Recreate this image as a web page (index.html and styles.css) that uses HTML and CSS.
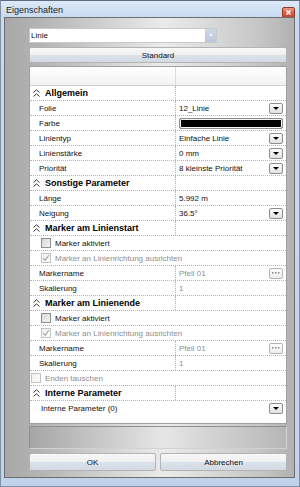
FILE: index.html
```html
<!DOCTYPE html>
<html lang="de">
<head>
  <meta charset="UTF-8" />
  <meta name="viewport" content="width=device-width, initial-scale=1.0" />
  <title>Eigenschaften</title>
  <link rel="stylesheet" href="styles.css">
</head>
<body>
  <div class="window">
    <div class="titlebar">
      <span class="title">Eigenschaften</span>
      <svg class="close" width="13" height="11" viewBox="0 0 13 11">
        <defs>
          <linearGradient id="red" x1="0" y1="0" x2="0" y2="1">
            <stop offset="0" stop-color="#eda08f"/>
            <stop offset="0.5" stop-color="#d9634a"/>
            <stop offset="1" stop-color="#c4432b"/>
          </linearGradient>
        </defs>
        <rect x="0.5" y="0.5" width="12" height="10" rx="1.5" fill="url(#red)" stroke="#8e3a2a"/>
        <path d="M4.5 3.5 L8.5 7.5 M8.5 3.5 L4.5 7.5" stroke="#fff" stroke-width="1.4"/>
      </svg>
    </div>

    <div class="client">
      <div class="combo">
        <span class="combo-text">Linie</span>
        <span class="combo-btn"><i class="combo-arrow"></i></span>
      </div>

      <div class="btn standard">Standard</div>

      <div class="grid">
        <div class="grid-head"><div class="name"></div><div class="value"></div></div>

        <!-- Allgemein -->
        <div class="row cat">
          <div class="name"><svg class="expander" width="7" height="8" viewBox="0 0 7 8"><path d="M0.5 3.5 L3.5 0.8 L6.5 3.5 M0.5 7.5 L3.5 4.8 L6.5 7.5" fill="none" stroke="#333" stroke-width="1"/></svg>Allgemein</div>
          <div class="value"></div>
        </div>
        <div class="row"><div class="name">Folie</div><div class="value">12_Linie<span class="drop"></span></div></div>
        <div class="row"><div class="name">Farbe</div><div class="value"><span class="swatch"></span></div></div>
        <div class="row"><div class="name">Linientyp</div><div class="value">Einfache Linie<span class="drop"></span></div></div>
        <div class="row"><div class="name">Linienstärke</div><div class="value">0 mm<span class="drop"></span></div></div>
        <div class="row"><div class="name">Priorität</div><div class="value">8 kleinste Priorität<span class="drop"></span></div></div>

        <!-- Sonstige Parameter -->
        <div class="row cat">
          <div class="name"><svg class="expander" width="7" height="8" viewBox="0 0 7 8"><path d="M0.5 3.5 L3.5 0.8 L6.5 3.5 M0.5 7.5 L3.5 4.8 L6.5 7.5" fill="none" stroke="#333" stroke-width="1"/></svg>Sonstige Parameter</div>
          <div class="value"></div>
        </div>
        <div class="row"><div class="name">Länge</div><div class="value">5.992 m</div></div>
        <div class="row"><div class="name">Neigung</div><div class="value">36.5°<span class="drop"></span></div></div>

        <!-- Marker am Linienstart -->
        <div class="row cat">
          <div class="name"><svg class="expander" width="7" height="8" viewBox="0 0 7 8"><path d="M0.5 3.5 L3.5 0.8 L6.5 3.5 M0.5 7.5 L3.5 4.8 L6.5 7.5" fill="none" stroke="#333" stroke-width="1"/></svg>Marker am Linienstart</div>
          <div class="value"></div>
        </div>
        <div class="row full"><span class="check"></span>Marker aktiviert</div>
        <div class="row full disabled"><span class="check checked"><svg width="8" height="8" viewBox="0 0 8 8"><path d="M1.2 4.2 L3.2 6.4 L6.8 1.2" fill="none" stroke="#a2a2a2" stroke-width="1.1"/></svg></span>Marker an Linienrichtung ausrichten</div>
        <div class="row"><div class="name">Markername</div><div class="value disabled">Pfeil 01<span class="drop dots"><svg width="8" height="2" viewBox="0 0 8 2"><rect x="0" y="0" width="1.5" height="1.5" fill="#888"/><rect x="3" y="0" width="1.5" height="1.5" fill="#888"/><rect x="6" y="0" width="1.5" height="1.5" fill="#888"/></svg></span></div></div>
        <div class="row"><div class="name">Skalierung</div><div class="value disabled">1</div></div>

        <!-- Marker am Linienende -->
        <div class="row cat">
          <div class="name"><svg class="expander" width="7" height="8" viewBox="0 0 7 8"><path d="M0.5 3.5 L3.5 0.8 L6.5 3.5 M0.5 7.5 L3.5 4.8 L6.5 7.5" fill="none" stroke="#333" stroke-width="1"/></svg>Marker am Linienende</div>
          <div class="value"></div>
        </div>
        <div class="row full"><span class="check"></span>Marker aktiviert</div>
        <div class="row full disabled"><span class="check checked"><svg width="8" height="8" viewBox="0 0 8 8"><path d="M1.2 4.2 L3.2 6.4 L6.8 1.2" fill="none" stroke="#a2a2a2" stroke-width="1.1"/></svg></span>Marker an Linienrichtung ausrichten</div>
        <div class="row"><div class="name">Markername</div><div class="value disabled">Pfeil 01<span class="drop dots"><svg width="8" height="2" viewBox="0 0 8 2"><rect x="0" y="0" width="1.5" height="1.5" fill="#888"/><rect x="3" y="0" width="1.5" height="1.5" fill="#888"/><rect x="6" y="0" width="1.5" height="1.5" fill="#888"/></svg></span></div></div>
        <div class="row"><div class="name">Skalierung</div><div class="value disabled">1</div></div>

        <div class="row full outer disabled"><span class="check light"></span>Enden tauschen</div>

        <!-- Interne Parameter -->
        <div class="row cat">
          <div class="name"><svg class="expander" width="7" height="8" viewBox="0 0 7 8"><path d="M0.5 3.5 L3.5 0.8 L6.5 3.5 M0.5 7.5 L3.5 4.8 L6.5 7.5" fill="none" stroke="#333" stroke-width="1"/></svg>Interne Parameter</div>
          <div class="value"></div>
        </div>
        <div class="row full last">Interne Parameter (0)<span class="drop"></span></div>
      </div>

      <div class="description"></div>

      <div class="actions">
        <div class="btn">OK</div>
        <div class="btn">Abbrechen</div>
      </div>
    </div>
  </div>
</body>
</html>
```

FILE: styles.css
```css
* { box-sizing: border-box; }
body {
  margin: 0;
  font-family: "Liberation Sans", Arial, sans-serif;
  font-size: 8px;
  color: #111;
  background: #fff;
}
.window {
  width: 300px;
  height: 487px;
  display: flex;
  flex-direction: column;
  border: 1px solid #7f90a6;
  border-top-color: #5d6b7c;
  background: linear-gradient(#dce9f7, #c8dbf0 16px, #bfd4ec);
}
.titlebar {
  height: 16px;
  display: flex;
  justify-content: space-between;
  align-items: center;
  padding: 0 4px 0 5px;
}
.title {
  font-size: 9px;
  color: #1c1c1c;
  padding-top: 2px;
}
.close {
  align-self: flex-end;
  margin-bottom: -1px;
}
.client {
  flex: 1;
  margin: 0 4px 8px 3px;
  border: 1px solid #6e6e6e;
  padding: 10px 7px 6px 24px;
  display: flex;
  flex-direction: column;
  background: linear-gradient(90deg, #a8a8a8 0%, #b4b4b4 12%, #ebebeb 55%, #c6c6c6 88%, #b1b1b1 100%);
}
.combo {
  width: 188px;
  height: 15px;
  margin-bottom: 4px;
  display: flex;
  background: #fff;
  border: 1px solid #c9c9c9;
}
.combo-text {
  flex: 1;
  padding-left: 1px;
  line-height: 13px;
}
.combo-btn {
  width: 11px;
  display: flex;
  justify-content: center;
  align-items: center;
  background: linear-gradient(#cfd6e6, #bcc6dc);
}
.combo-arrow {
  border-top: 3px solid #eef1f8;
  border-left: 2.5px solid transparent;
  border-right: 2.5px solid transparent;
}
.btn {
  height: 18px;
  display: flex;
  justify-content: center;
  align-items: center;
  border: 1px solid #b3b3b3;
  border-radius: 2px;
  background: linear-gradient(#f8f8f8 0%, #f0f0f0 48%, #dce2ea 52%, #d3dae4 100%);
  color: #111;
}
.standard {
  height: 16px;
  margin-bottom: 3px;
}
.grid {
  height: 358px;
  margin-bottom: 2px;
  display: flex;
  flex-direction: column;
  border: 1px solid #9f9f9f;
  background: #fff;
}
.grid-head {
  height: 19px;
  display: flex;
  border-bottom: 1px solid #cfcfcf;
  background: linear-gradient(#ffffff, #f1f1f1);
}
.grid-head .name {
  width: 146px;
  border-right: 1px solid #dcdcdc;
}
.row {
  height: 15px;
  flex-shrink: 0;
  display: flex;
  align-items: stretch;
  border-bottom: 1px dotted #b5b5b5;
  white-space: nowrap;
}
.name {
  width: 146px;
  display: flex;
  align-items: center;
  padding-left: 9px;
  border-right: 1px dotted #b5b5b5;
}
.value {
  flex: 1;
  display: flex;
  align-items: center;
  padding: 0 3px 0 3px;
}
.cat .name {
  padding-left: 3px;
  font-weight: bold;
  font-size: 9px;
  color: #000;
  overflow: visible;
}
.expander {
  margin-right: 5px;
  flex-shrink: 0;
}
.full {
  align-items: center;
  padding: 0 3px 0 11px;
}
.full.outer {
  padding-left: 1px;
}
.last {
  border-bottom: none;
}
.disabled {
  color: #8e8e8e;
}
.drop {
  margin-left: auto;
  width: 14px;
  height: 11px;
  display: flex;
  justify-content: center;
  align-items: center;
  border: 1px solid #8e8e8e;
  border-radius: 2px;
  background: linear-gradient(#fdfdfd, #e1e1e1);
}
.drop::after {
  content: "";
  border-top: 3px solid #000;
  border-left: 3px solid transparent;
  border-right: 3px solid transparent;
}
.drop.dots {
  border-color: #b4b4b4;
  background: linear-gradient(#fefefe, #ececec);
}
.drop.dots::after {
  display: none;
}
.swatch {
  flex: 1;
  height: 11px;
  margin-right: 0;
  background: #000;
  border: 1px solid #8a8a8a;
  border-radius: 2px;
  box-shadow: inset 0 0 0 1px #f4f4f4;
}
.check {
  width: 10px;
  height: 10px;
  margin-right: 4px;
  flex-shrink: 0;
  display: flex;
  justify-content: center;
  align-items: center;
  border: 1px solid #8f8f8f;
  background: linear-gradient(135deg, #d6d6d6, #f6f6f6);
}
.check.checked,
.check.light {
  border-color: #c3c3c3;
  background: linear-gradient(135deg, #efefef, #fbfbfb);
}
.description {
  height: 23px;
  margin-bottom: 4px;
  border: 1px solid #8f8f8f;
  border-right-color: #d2d2d2;
  border-bottom-color: #d2d2d2;
  background: linear-gradient(90deg, #a6a6a6 0%, #e6e6e6 52%, #b6b6b6 100%);
}
.actions {
  display: flex;
  gap: 4px;
}
.actions .btn {
  flex: 1;
}
```
